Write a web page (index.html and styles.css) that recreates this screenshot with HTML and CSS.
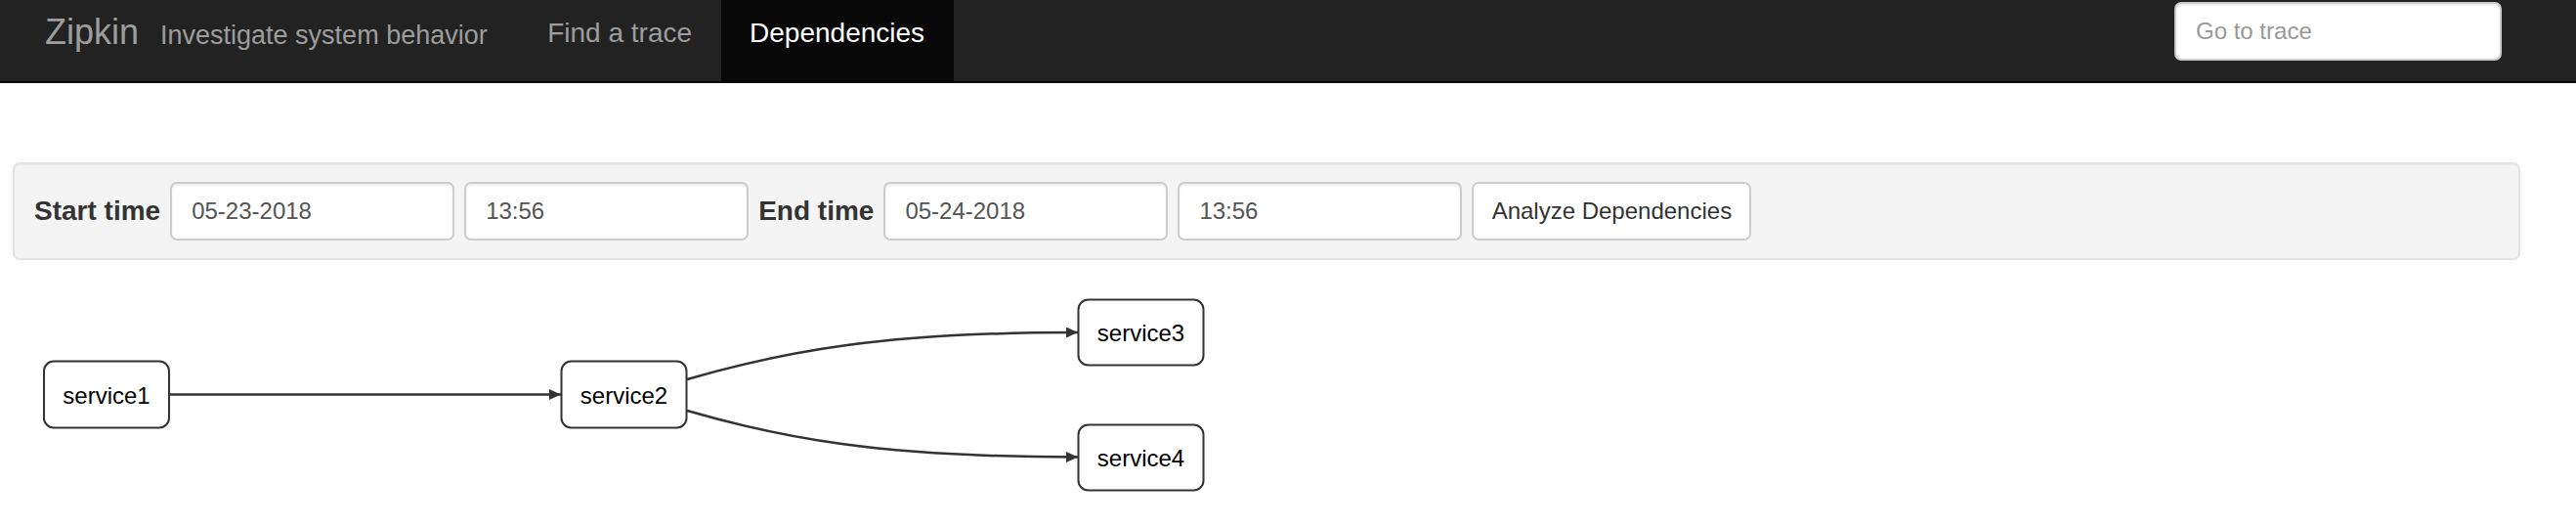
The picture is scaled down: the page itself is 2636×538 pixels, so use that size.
FILE: index.html
```html
<!DOCTYPE html>
<html>
<head>
<meta charset="utf-8">
<title>Zipkin - Dependencies</title>
<link rel="stylesheet" href="styles.css">
</head>
<body>
<nav class="navbar">
  <a class="brand" href="#">Zipkin</a>
  <span class="tagline">Investigate system behavior</span>
  <ul class="nav">
    <li><a href="#">Find a trace</a></li>
    <li class="active"><a href="#">Dependencies</a></li>
  </ul>
  <form class="search">
    <input type="text" class="search-input" placeholder="Go to trace">
  </form>
</nav>

<div class="well">
  <label class="field-label">Start time</label>
  <input type="text" class="form-input" value="05-23-2018">
  <input type="text" class="form-input" value="13:56">
  <label class="field-label">End time</label>
  <input type="text" class="form-input" value="05-24-2018">
  <input type="text" class="form-input" value="13:56">
  <button class="btn" type="button">Analyze Dependencies</button>
</div>

<svg class="graph" width="1300" height="270" viewBox="0 0 1300 270">
  <defs>
    <marker id="arrow" markerUnits="userSpaceOnUse" markerWidth="12" markerHeight="11" refX="12" refY="5.5" orient="auto">
      <path d="M0,0 L12,5.5 L0,11 z" fill="#333"></path>
    </marker>
  </defs>
  <g class="edges">
    <path class="edge" d="M173,135.5 L574,135.5" marker-end="url(#arrow)"></path>
    <path class="edge" d="M703,120 C800,92 900,72 1103,72" marker-end="url(#arrow)"></path>
    <path class="edge" d="M703,152 C800,180 900,199.5 1103,199.5" marker-end="url(#arrow)"></path>
  </g>
  <g class="nodes">
    <rect class="node" x="45" y="101.5" width="128" height="68" rx="10" ry="10"></rect>
    <text class="node-label" x="109" y="136">service1</text>
    <rect class="node" x="574.5" y="101.5" width="128" height="68" rx="10" ry="10"></rect>
    <text class="node-label" x="638.5" y="136">service2</text>
    <rect class="node" x="1103.5" y="38.5" width="128" height="67" rx="10" ry="10"></rect>
    <text class="node-label" x="1167.5" y="72.5">service3</text>
    <rect class="node" x="1103.5" y="166.5" width="128" height="67" rx="10" ry="10"></rect>
    <text class="node-label" x="1167.5" y="200.5">service4</text>
  </g>
</svg>
</body>
</html>
```

FILE: styles.css
```css
html, body {
  margin: 0;
  padding: 0;
  background: #fff;
  font-family: "Liberation Sans", Arial, Helvetica, sans-serif;
  color: #333;
}

.navbar {
  display: flex;
  align-items: flex-start;
  height: 83px;
  background: #222;
  border-bottom: 2px solid #080808;
}

.brand {
  margin-left: 46px;
  padding-top: 10.5px;
  font-size: 36px;
  line-height: 44px;
  color: #9d9d9d;
  text-decoration: none;
}

.tagline {
  margin-left: 22px;
  padding-top: 16px;
  font-size: 27px;
  line-height: 40px;
  color: #9d9d9d;
}

.nav {
  display: flex;
  list-style: none;
  margin: 0 0 0 32px;
  padding: 0;
  height: 83px;
}

.nav a {
  display: block;
  height: 83px;
  box-sizing: border-box;
  padding: 14px 29.5px 0;
  font-size: 28px;
  line-height: 40px;
  color: #9d9d9d;
  text-decoration: none;
}

.nav .active a {
  background: #080808;
  color: #fff;
}

.search {
  margin: 2px 76px 0 auto;
}

.search-input {
  box-sizing: border-box;
  width: 335px;
  height: 60px;
  padding: 0 20px;
  border: 2px solid #ccc;
  border-radius: 7px;
  background: #fff;
  font-family: "Liberation Sans", Arial, sans-serif;
  font-size: 24px;
  color: #555;
  box-shadow: inset 0 2px 2px rgba(0, 0, 0, 0.075);
  outline: none;
}

.search-input::placeholder {
  color: #999;
}

.well {
  display: flex;
  align-items: center;
  gap: 10px;
  box-sizing: border-box;
  height: 100px;
  margin: 81px 57px 0 13px;
  padding: 0 20px;
  background: #f4f4f4;
  border: 2px solid #e3e3e3;
  border-radius: 7px;
  box-shadow: inset 0 1px 1px rgba(0, 0, 0, 0.05);
}

.field-label {
  font-size: 28px;
  font-weight: bold;
  color: #333;
  white-space: nowrap;
}

.form-input {
  box-sizing: border-box;
  width: 291px;
  height: 60px;
  padding: 0 20px;
  border: 2px solid #ccc;
  border-radius: 7px;
  background: #fff;
  font-family: "Liberation Sans", Arial, sans-serif;
  font-size: 24px;
  color: #555;
  box-shadow: inset 0 2px 2px rgba(0, 0, 0, 0.075);
  outline: none;
}

.btn {
  box-sizing: border-box;
  width: 286px;
  height: 60px;
  padding: 0 8px;
  border: 2px solid #ccc;
  border-radius: 7px;
  background: #fff;
  font-family: "Liberation Sans", Arial, sans-serif;
  font-size: 24px;
  color: #333;
  white-space: nowrap;
}

.graph {
  display: block;
  margin-top: 2px;
}

.edge {
  fill: none;
  stroke: #333;
  stroke-width: 2.5px;
}

.node {
  fill: #fff;
  stroke: #333;
  stroke-width: 2px;
}

.node-label {
  font-family: "Liberation Sans", Arial, sans-serif;
  font-size: 24px;
  fill: #000;
  text-anchor: middle;
  dominant-baseline: central;
}
```
